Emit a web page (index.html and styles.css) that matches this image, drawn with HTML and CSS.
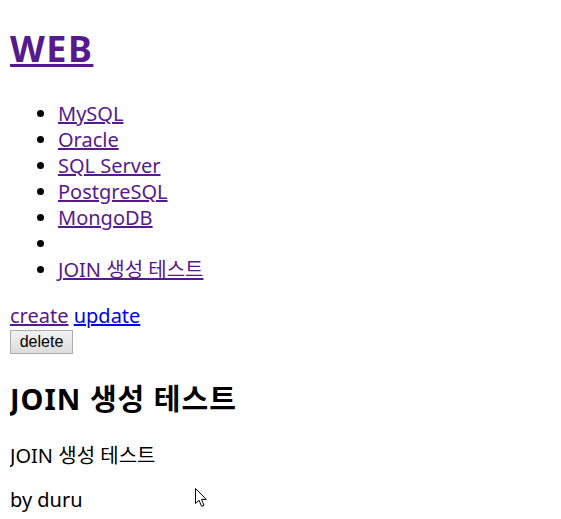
FILE: index.html
```html
<!DOCTYPE html>
<html lang="ko">
  <head>
    <meta charset="UTF-8" />
    <title>WEB - JOIN 생성 테스트</title>
    <link rel="stylesheet" href="styles.css">
  </head>
  <body>
    <h1><a href="/" class="visited">WEB</a></h1>
    <ul class="topics">
      <li><a href="/?id=1" class="visited">MySQL</a></li>
      <li><a href="/?id=2" class="visited">Oracle</a></li>
      <li><a href="/?id=3" class="visited">SQL Server</a></li>
      <li><a href="/?id=4" class="visited">PostgreSQL</a></li>
      <li><a href="/?id=5" class="visited">MongoDB</a></li>
      <li><a href="/?id=6" class="visited"></a></li>
      <li><a href="/?id=7" class="visited">JOIN 생성 테스트</a></li>
    </ul>
    <a href="/create" class="visited">create</a> <a href="/update?id=7">update</a>
    <form action="delete_process" method="post" class="delete-form">
      <input type="hidden" name="id" value="7">
      <input type="submit" value="delete" class="btn">
    </form>
    <h2>JOIN 생성 테스트</h2>
    <p>JOIN 생성 테스트</p>
    <p>by duru</p>

    <svg class="cursor" width="13" height="20" viewBox="0 0 13 20">
      <path d="M0.5 0.5 L0.5 15.5 L4 12.2 L6.6 18.3 L9 17.3 L6.5 11.4 L11.3 11.4 Z" fill="#fff" stroke="#000" stroke-width="1" stroke-linejoin="miter"/>
    </svg>
  </body>
</html>
```

FILE: styles.css
```css
body {
  margin: 10px;
  font-family: "Noto Sans", "Noto Sans CJK KR", sans-serif;
  font-size: 20px;
  line-height: 26px;
  color: #000;
  background: #fff;
  position: relative;
}

a {
  color: #0000ee;
}

a.visited {
  color: #551a8b;
}

h1 {
  font-size: 36px;
  line-height: 44px;
  font-weight: 700;
  letter-spacing: 1.5px;
  margin: 17px 0 30px;
}

.topics {
  margin: 0 0 20px;
  padding-left: 48px;
}

.delete-form {
  margin: 1px 0 0;
}

.btn {
  display: block;
  width: 63px;
  height: 24px;
  padding: 0;
  font-family: "Liberation Sans", Arial, sans-serif;
  font-size: 16px;
  color: #000;
  background: linear-gradient(#f2f2f2, #dddddd);
  border: 1px solid #acacac;
  border-radius: 0;
}

h2 {
  font-size: 29px;
  line-height: 34px;
  font-weight: 700;
  letter-spacing: 1px;
  margin: 28px 0 27px;
}

p {
  margin: 18px 0;
}

.cursor {
  position: absolute;
  left: 185px;
  top: 478px;
}
```
